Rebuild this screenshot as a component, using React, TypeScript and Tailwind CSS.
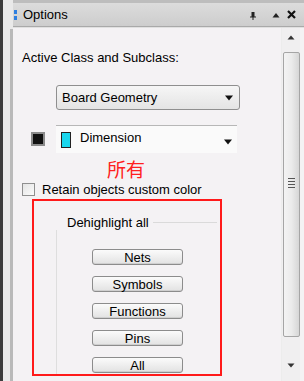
import React from "react"

const font = { fontFamily: '"Liberation Sans", Arial, "Noto Sans CJK SC", sans-serif' }

function Caret({ className = "" }: { className?: string }) {
  return (
    <svg width="10" height="6" viewBox="0 0 10 6" className={className}>
      <path d="M1 0.5h8L5 5.5z" fill="#111" />
    </svg>
  )
}

function PushButton({ label }: { label: string }) {
  return (
    <div className="w-[91px] h-[16px] rounded-[3px] border border-[#8c8c8c] bg-gradient-to-b from-[#fbfbfb] to-[#e2e2e2] flex items-center justify-center text-[13px] leading-none text-black shadow-[inset_0_-1px_0_#cfcfcf]">
      {label}
    </div>
  )
}

export default function App() {
  return (
    <div className="w-[304px] h-[381px] overflow-hidden flex bg-[#e9e9e9] text-black" style={font}>
      {/* left window edge */}
      <div className="w-[3px] bg-[#3d3d3d]" />
      <div className="w-[7px] bg-[#ebebeb]" />
      <div className="w-[3px] mt-[29px] bg-[#b9b9b9]" />

      <div className="flex-1 flex flex-col">
        {/* title bar */}
        <div className="h-[27px] border-t-[3px] border-[#bdbdbd] bg-gradient-to-b from-[#dcdcdc] to-[#cdcdcd] flex items-center pl-[1px] pr-[8px] border-b border-b-[#a9a9a9]">
          <div className="flex flex-col gap-[2px] mr-[6px]">
            <div className="w-[3px] h-[4px] bg-[#2f7fe0]" />
            <div className="w-[3px] h-[4px] bg-[#2f7fe0]" />
          </div>
          <span className="text-[13px] leading-none">Options</span>
          <div className="flex-1" />
          <svg width="8" height="10" viewBox="0 0 8 10" className="mr-[15px] mt-[2px]">
            <path d="M2.5 1h3v4.5h-3z M1 5.5h6v1H1z M3.5 6.5h1V9h-1z" fill="#222" />
          </svg>
          <svg width="8" height="6" viewBox="0 0 8 6" className="mr-[7px]">
            <path d="M0.5 5.5h7L4 1z" fill="#222" />
          </svg>
          <svg width="9" height="9" viewBox="0 0 9 9">
            <path d="M1 1l7 7M8 1L1 8" stroke="#111" strokeWidth="2.2" />
          </svg>
        </div>

        {/* content frame */}
        <div className="flex-1 flex border-t border-[#e0e0e0] bg-[#f4f2f4] pr-[4px]">
          <div className="flex-1 flex flex-col pl-[9px] pt-[22px]">
            <div className="text-[13px] leading-[15px]">Active Class and Subclass:</div>

            <div className="ml-[34px] mt-[20px] w-[184px] h-[25px] rounded-[3px] border border-[#8f8f8f] bg-gradient-to-b from-[#f6f6f6] to-[#e4e4e4] flex items-center pl-[5px] pr-[5px]">
              <span className="text-[13px] flex-1">Board Geometry</span>
              <Caret />
            </div>

            <div className="mt-[15px] flex items-center">
              <div className="ml-[9px] w-[14px] h-[14px] border-[2px] border-[#8a8a8a] bg-[#101010]" />
              <div className="ml-[11px] w-[181px] h-[28px] border-t border-[#b7b7b7] bg-[#fafafa] flex items-center pl-[5px] pr-[4px]">
                <div className="w-[10px] h-[16px] border border-[#222] bg-[#1ad7ee] mr-[9px]" />
                <span className="text-[13px] flex-1 -mt-[3px]">Dimension</span>
                <Caret className="mt-[4px]" />
              </div>
            </div>

            <div className="ml-[85px] mt-[8px] text-[19px] leading-[19px] text-[#ff2020]">所有</div>

            <div className="mt-[2px] flex items-center">
              <div className="w-[13px] h-[13px] border border-[#8f8f8f] bg-gradient-to-br from-[#e4e4e4] to-[#fbfbfb]" />
              <span className="ml-[7px] text-[13px] leading-[15px]">Retain objects custom color</span>
            </div>

            <div className="ml-[10px] mt-[2px] w-[190px] h-[177px] border-2 border-[#ff1a1a] flex flex-col">
              <div className="mt-[14px] flex items-center">
                <div className="w-[22px]" />
                <span className="text-[13px] leading-[15px] ml-[11px]">Dehighlight all</span>
                <div className="flex-1 h-px bg-[#dadada] ml-[4px] mr-[3px]" />
              </div>
              <div className="ml-[22px] flex-1 border-l border-[#dedede] flex flex-col items-start pl-[35px] pt-[19px] gap-[11px]">
                <PushButton label="Nets" />
                <PushButton label="Symbols" />
                <PushButton label="Functions" />
                <PushButton label="Pins" />
                <PushButton label="All" />
              </div>
            </div>
          </div>

          {/* scrollbar */}
          <div className="w-[19px] flex flex-col items-center border-l border-[#ececec] bg-[#f0eff0]">
            <svg width="8" height="5" viewBox="0 0 8 5" className="mt-[7px]">
              <path d="M0.5 4.5h7L4 0.5z" fill="#333" />
            </svg>
            <div className="mt-[12px] w-[17px] h-[285px] rounded-[2px] border border-[#a5a5a5] bg-gradient-to-r from-[#f3f3f3] via-[#ebebeb] to-[#d6d6d6] flex items-center justify-center">
              <div className="flex flex-col gap-[2px] -mt-[24px]">
                <div className="w-[7px] h-px bg-[#555]" />
                <div className="w-[7px] h-px bg-[#555]" />
                <div className="w-[7px] h-px bg-[#555]" />
                <div className="w-[7px] h-px bg-[#555]" />
              </div>
            </div>
            <div className="flex-1" />
            <svg width="8" height="5" viewBox="0 0 8 5" className="mb-[13px]">
              <path d="M0.5 0.5h7L4 4.5z" fill="#333" />
            </svg>
          </div>
        </div>
      </div>
    </div>
  )
}
